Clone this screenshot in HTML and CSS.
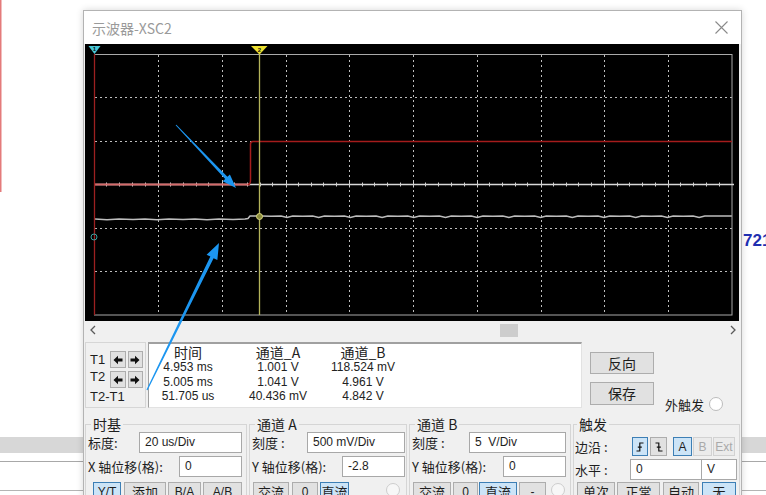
FILE: index.html
```html
<!DOCTYPE html>
<html lang="zh-CN">
<head>
<meta charset="utf-8">
<title>示波器-XSC2</title>
<link rel="stylesheet" href="styles.css">
</head>
<body>
<div class="desktop">
  <div class="window">
    <div class="titlebar">
      <span class="title">示波器-XSC2</span>
      <svg class="close" width="13" height="13" viewBox="0 0 13 13"><path d="M0.5 0.5L12.5 12.5M12.5 0.5L0.5 12.5"/></svg>
    </div>

    <div class="screen">
      <svg class="scope" width="654" height="277" viewBox="85 44 654 277">
        <path class="grid" d="M158.5 55V315M222.5 55V315M286.5 55V315M349.5 55V315M413.5 55V315M477.5 55V315M541.5 55V315M604.5 55V315M668.5 55V315M95 97.5H732M95 141.5H732M95 228.5H732M95 271.5H732"/>
        <rect class="frame" x="94.5" y="54.5" width="637.5" height="260.5"/>
        <path class="axis" d="M94 184.5H734"/>
        <path class="ticks" d="M106.5 182.5v4M119.5 182.5v4M132.5 182.5v4M145.5 182.5v4M158.5 181.5v6M170.5 182.5v4M183.5 182.5v4M196.5 182.5v4M208.5 182.5v4M222.5 181.5v6M234.5 182.5v4M247.5 182.5v4M260.5 182.5v4M272.5 182.5v4M286.5 181.5v6M298.5 182.5v4M311.5 182.5v4M323.5 182.5v4M336.5 182.5v4M349.5 181.5v6M362.5 182.5v4M374.5 182.5v4M387.5 182.5v4M400.5 182.5v4M413.5 181.5v6M425.5 182.5v4M438.5 182.5v4M451.5 182.5v4M464.5 182.5v4M477.5 181.5v6M489.5 182.5v4M502.5 182.5v4M515.5 182.5v4M527.5 182.5v4M541.5 181.5v6M553.5 182.5v4M566.5 182.5v4M578.5 182.5v4M591.5 182.5v4M604.5 181.5v6M617.5 182.5v4M629.5 182.5v4M642.5 182.5v4M655.5 182.5v4M668.5 181.5v6M680.5 182.5v4M693.5 182.5v4M706.5 182.5v4M719.5 182.5v4"/>
        <path class="trace-b" d="M95 219l12 0.8l12 -0.8l14 0.6l12 -0.6l12 0.8l12 -0.8l14 0.6l12 -0.6l12 0.8l12 -0.8l14 0.6l12 -0.6l3 -0.5l2 -2.5l3 0l8 0l10 0.3l10 -0.3l6 1.5l5.7 -1.5l10 0.3l10 -0.3l6 1.5l5.7 -1.5l10 0.3l10 -0.3l6 1.5l5.7 -1.5l10 0.3l10 -0.3l6 1.5l5.7 -1.5l10 0.3l10 -0.3l6 1.5l5.7 -1.5l10 0.3l10 -0.3l6 1.5l5.7 -1.5l10 0.3l10 -0.3l6 1.5l5.7 -1.5l10 0.3l10 -0.3l6 1.5l5.7 -1.5l10 0.3l10 -0.3l6 1.5l5.7 -1.5l10 0.3l10 -0.3l6 1.5l5.7 -1.5l10 0.3l10 -0.3l6 1.5l5.7 -1.5l10 0.3l10 -0.3l6 1.5l5.7 -1.5l10 0.3l10 -0.3l6 1.5l5.7 -1.5l10 0.3l10 -0.3l6 1.5l5.7 -1.5l27 0"/>
        <path class="trace-a-low" d="M95 184.5H249.5"/>
        <path class="trace-a" d="M248 184.5Q250.5 184.5 250.5 180V144Q250.5 141.5 253 141.5H732"/>
        <path class="cur1" d="M94.5 54V315"/>
        <path class="cur2" d="M259.5 46V315"/>
        <circle class="dot2" cx="259.5" cy="216.5" r="3"/>
        <circle class="dot1" cx="94" cy="237" r="3"/>
        <polygon class="m1" points="88.5,46 100.5,46 94.5,54"/>
        <text class="mt" x="94.5" y="51.3">1</text>
        <polygon class="m2" points="251,46 267.5,46 259.5,54.5"/>
        <text class="mt" x="259.5" y="51.5">2</text>
      </svg>
    </div>

    <div class="hscroll">
      <svg class="chev" width="6" height="10" viewBox="0 0 6 10"><path d="M5 1L1 5L5 9"/></svg>
      <div class="track"><div class="thumb"></div></div>
      <svg class="chev" width="6" height="10" viewBox="0 0 6 10"><path d="M1 1L5 5L1 9"/></svg>
    </div>

    <div class="readout">
      <div class="cursors">
        <div class="crow">
          <span class="clabel">T1</span>
          <span class="abtn"><svg width="10" height="10" viewBox="0 0 10 10"><path d="M0.5 5L5 0.8V3.6H9.5V6.4H5V9.2Z"/></svg></span>
          <span class="abtn"><svg width="10" height="10" viewBox="0 0 10 10"><path d="M9.5 5L5 0.8V3.6H0.5V6.4H5V9.2Z"/></svg></span>
        </div>
        <div class="crow crow2">
          <span class="clabel clabel2">T2</span>
          <span class="abtn"><svg width="10" height="10" viewBox="0 0 10 10"><path d="M0.5 5L5 0.8V3.6H9.5V6.4H5V9.2Z"/></svg></span>
          <span class="abtn"><svg width="10" height="10" viewBox="0 0 10 10"><path d="M9.5 5L5 0.8V3.6H0.5V6.4H5V9.2Z"/></svg></span>
        </div>
        <div class="crow3">T2-T1</div>
      </div>

      <div class="table">
        <div class="th">时间</div><div class="th">通道_A</div><div class="th">通道_B</div>
        <div>4.953 ms</div><div>1.001 V</div><div>118.524 mV</div>
        <div>5.005 ms</div><div>1.041 V</div><div>4.961 V</div>
        <div>51.705 us</div><div>40.436 mV</div><div>4.842 V</div>
      </div>

      <div class="actions">
        <div class="btn2">反向</div>
        <div class="btn2 btn2b">保存</div>
      </div>

      <div class="ext">
        <span>外触发</span>
        <span class="radio"></span>
      </div>
    </div>

    <div class="controls">
      <fieldset class="grp g-time">
        <legend>时基</legend>
        <div class="row r1">
          <span class="lbl">标度:</span>
          <div class="field f-scale-t">20 us/Div</div>
        </div>
        <div class="row r2">
          <span class="lbl">X 轴位移(格):</span>
          <div class="field f-pos">0</div>
        </div>
        <div class="brow b-time">
          <div class="btn on asc w28">Y/T</div>
          <div class="btn w42 gap3">添加</div>
          <div class="btn asc w33 gap2">B/A</div>
          <div class="btn asc w39 gap2">A/B</div>
        </div>
      </fieldset>

      <fieldset class="grp g-cha">
        <legend>通道 A</legend>
        <div class="row r1">
          <span class="lbl">刻度 :</span>
          <div class="field f-scale-a">500 mV/Div</div>
        </div>
        <div class="row r2">
          <span class="lbl">Y 轴位移(格):</span>
          <div class="field f-pos">-2.8</div>
        </div>
        <div class="brow b-cha">
          <div class="btn w36">交流</div>
          <div class="btn asc w26 gap3">0</div>
          <div class="btn on w29 gap2">直流</div>
          <span class="radio dim rad-a"></span>
        </div>
      </fieldset>

      <fieldset class="grp g-chb">
        <legend>通道 B</legend>
        <div class="row r1">
          <span class="lbl">刻度 :</span>
          <div class="field f-scale-b">5&nbsp; V/Div</div>
        </div>
        <div class="row r2">
          <span class="lbl">Y 轴位移(格):</span>
          <div class="field f-pos">0</div>
        </div>
        <div class="brow b-chb">
          <div class="btn w38">交流</div>
          <div class="btn asc w25 gap2">0</div>
          <div class="btn on w38 gap1">直流</div>
          <div class="btn asc w27 gap2">-</div>
          <span class="radio dim rad-b"></span>
        </div>
      </fieldset>

      <fieldset class="grp g-trig">
        <legend>触发</legend>
        <div class="trow t1">
          <span class="lbl tl">边沿 :</span>
          <div class="btn on edge w16 gap2"><svg width="12" height="14" viewBox="0 0 12 14"><path d="M2.5 11H5.8V3H9.5M3.8 7.2H7.8"/></svg></div>
          <div class="btn edge w17 gap2"><svg width="12" height="14" viewBox="0 0 12 14"><path d="M2.5 3H5.8V11H9.5M3.8 7.2H7.8"/></svg></div>
          <div class="btn on asc w19 gap6">A</div>
          <div class="btn off asc w19 gap1">B</div>
          <div class="btn off asc w22 gap1">Ext</div>
        </div>
        <div class="trow t2">
          <span class="lbl tl">水平 :</span>
          <div class="field f-level">0</div>
          <div class="field f-unit">V</div>
        </div>
        <div class="brow b-trig">
          <div class="btn w38">单次</div>
          <div class="btn w43 gap2">正常</div>
          <div class="btn w36 gap3">自动</div>
          <div class="btn on w34 gap3">无</div>
        </div>
      </fieldset>
    </div>
  </div>

  <div class="sidenote">721</div>

  <svg class="annot" width="766" height="495" viewBox="0 0 766 495">
    <polygon points="175.64,125.35 225.2,178.94 222.7,181.35 236,188 229.9,174.45 227.4,176.86 176.36,124.65"/>
    <polygon points="146.46,389.74 210.34,256.58 206.57,254.73 219,243 217.35,260.0 213.58,258.16 147.54,390.26"/>
  </svg>
</div>
</body>
</html>
```

FILE: styles.css
```css
* { box-sizing: border-box; }

body {
  margin: 0;
  width: 766px;
  height: 495px;
  overflow: hidden;
  background: #fff;
  font-family: "Noto Sans CJK SC", "Noto Sans", sans-serif;
  color: #1e1e1e;
}

.desktop {
  position: relative;
  width: 766px;
  height: 495px;
  overflow: hidden;
  background:
    linear-gradient(#e47b7b, #e47b7b) 0 0 / 1.5px 192px no-repeat,
    linear-gradient(#fff 0 437px, #d7d7d7 437px 453px, #fff 453px 461px, #a8a8a8 461px 462px, #fff 462px 490px, #b4b4b4 490px 491px, #fff 491px);
}

/* window */
.window {
  position: absolute;
  left: 83px;
  top: 10px;
  width: 659px;
  height: 500px;
  border: 1px solid #b3b3b3;
  background: #f0f0f0;
  box-shadow: 0 0 7px rgba(0, 0, 0, 0.16);
}

.titlebar {
  height: 33px;
  background: #fff;
  display: flex;
  align-items: center;
  padding-left: 8px;
}
.title { font-size: 14px; color: #9a9a9a; line-height: 1; }
.close { margin-left: auto; margin-right: 13px; stroke: #8a8a8a; stroke-width: 1.1; fill: none; }

/* scope screen */
.screen { margin-left: 1px; width: 654px; height: 277px; background: #000; }
.scope { display: block; }
.scope .grid { stroke: #bdbdbd; stroke-width: 1; stroke-dasharray: 2 3; fill: none; }
.scope .frame { fill: none; stroke: #a9a9a9; stroke-width: 1; }
.scope .axis { stroke: #d8d8d8; stroke-width: 1.5; }
.scope .ticks { stroke: #d0d0d0; stroke-width: 1; }
.scope .trace-b { stroke: #bdbdbd; stroke-width: 1.5; fill: none; }
.scope .trace-a-low { stroke: #d46a6a; stroke-width: 2.2; }
.scope .trace-a { stroke: #a51c1c; stroke-width: 1.5; fill: none; }
.scope .cur1 { stroke: #9c2020; stroke-width: 1.3; }
.scope .cur2 { stroke: #b4b45a; stroke-width: 1.3; }
.scope .dot2 { fill: #8c8c3c; stroke: #d8d880; stroke-width: 1; }
.scope .dot1 { fill: none; stroke: #3aa0a0; stroke-width: 1; }
.scope .m1 { fill: #48c8d8; }
.scope .m2 { fill: #ece030; }
.scope .mt { font: bold 6px "Liberation Sans", sans-serif; text-anchor: middle; fill: #111; }

/* scrollbar */
.hscroll { height: 18px; display: flex; align-items: center; padding: 0 5px 0 6px; }
.chev { stroke: #5a5a5a; stroke-width: 1.3; fill: none; flex: none; }
.track { flex: 1; height: 13px; }
.thumb { margin-left: 404px; width: 18px; height: 13px; background: #cdcdcd; }

/* readout row */
.readout { height: 70px; display: flex; align-items: flex-start; padding-top: 3px; }

.cursors {
  margin-left: 1px;
  width: 61px;
  height: 66px;
  border: 1px solid #d6d6d6;
  padding: 8px 0 0 4px;
  font-family: "Liberation Sans", sans-serif;
  font-size: 13px;
}
.crow { display: flex; align-items: center; height: 17px; }
.crow2 { margin-top: 3px; }
.clabel { width: 21px; line-height: 17px; }
.clabel2 { margin-top: -6px; }
.abtn {
  width: 16px;
  height: 17px;
  border: 1px solid #adadad;
  background: #e1e1e1;
  display: flex;
  align-items: center;
  justify-content: center;
  margin-right: 2px;
}
.abtn svg { fill: #111; }
.crow3 { margin-top: 2px; line-height: 14px; }

.table {
  margin-left: 2px;
  width: 434px;
  height: 66px;
  background: #fff;
  border-style: solid;
  border-width: 2px 1px 1px 1px;
  border-color: #a0a0a0 #e2e2e2 #e2e2e2 #a0a0a0;
  display: grid;
  grid-template-columns: 78px 102px 68px;
  grid-template-rows: 16px 14.5px 14.5px 14.5px;
  justify-items: center;
  font-family: "Liberation Sans", sans-serif;
  font-size: 12px;
  line-height: 14.5px;
  color: #222;
}
.table div { white-space: nowrap; }
.table .th { font-family: "Noto Sans CJK SC", sans-serif; font-size: 14px; line-height: 16px; }

.actions { margin-left: 8px; padding-top: 10px; display: flex; flex-direction: column; gap: 8px; }
.btn2 {
  width: 64px;
  height: 22px;
  border: 1px solid #adadad;
  background: #e1e1e1;
  font-size: 14px;
  line-height: 20px;
  text-align: center;
}
.btn2b { height: 23px; }

.ext { margin-left: 11px; margin-top: 54px; display: flex; align-items: center; height: 16px; font-size: 13px; }
.ext .radio { margin-left: 5px; }

.radio {
  display: block;
  width: 14px;
  height: 14px;
  border-radius: 50%;
  border: 1px solid #bcbcbc;
  background: #fff;
  flex: none;
}
.radio.dim { border-color: #cdcdcd; background: #f7f7f7; }

/* controls */
.controls { display: flex; gap: 2px; padding: 8px 0 0 1px; }
.grp {
  margin: 0;
  min-width: 0;
  height: 110px;
  border: 1px solid #d5d5d5;
  padding: 0 4px 0 2px;
}
.grp legend { padding: 0 2px; margin-left: 3px; font-size: 14px; line-height: 15px; }
.g-time { width: 162px; }
.g-cha { width: 158px; padding-right: 1px; }
.g-chb { width: 162px; }
.g-trig { width: 167px; padding-left: 1px; padding-right: 2px; }
.g-trig legend { margin-left: 2px; }

.lbl { font-size: 13px; white-space: nowrap; line-height: 21px; }
.row { display: flex; align-items: center; justify-content: space-between; height: 21px; }
.r2 { margin-top: 3px; }

.field {
  height: 21px;
  border: 1px solid #a8a8a8;
  background: #fff;
  font-family: "Liberation Sans", sans-serif;
  font-size: 12px;
  line-height: 19px;
  padding-left: 5px;
  white-space: nowrap;
  flex: none;
}
.f-scale-t { width: 103px; }
.f-pos { width: 63px; }
.f-scale-a { width: 98px; }
.f-scale-b { width: 97px; }
.f-level { width: 72px; }
.f-unit { width: 35px; border-left: none; }

.brow { display: flex; align-items: flex-start; margin-top: 5px; }
.b-time { padding-left: 5px; }
.b-cha { padding-left: 1px; }
.b-chb { padding-left: 1px; }
.b-trig { margin-top: 2px; padding-left: 2px; }

.trow { display: flex; align-items: center; }
.t1 { margin-top: 5px; height: 19px; }
.t2 { margin-top: 3px; height: 21px; }
.tl { width: 55px; }

.btn {
  height: 20px;
  border: 1px solid #adadad;
  background: #e1e1e1;
  font-size: 13px;
  line-height: 18px;
  text-align: center;
  overflow: hidden;
  white-space: nowrap;
  flex: none;
}
.t1 .btn { height: 19px; }
.btn.on { background: #cce4f7; border-color: #3d7fb5; }
.btn.off { background: #ebebeb; border-color: #d2d2d2; color: #a9a9a9; }
.btn.asc { font-family: "Liberation Sans", sans-serif; font-size: 12px; }
.btn.edge { display: flex; align-items: center; justify-content: center; }
.btn.edge svg { stroke: #111; stroke-width: 1.2; fill: none; }

.w16 { width: 16px; } .w17 { width: 17px; } .w19 { width: 19px; } .w22 { width: 22px; }
.w25 { width: 25px; } .w26 { width: 26px; } .w27 { width: 27px; } .w28 { width: 28px; }
.w29 { width: 29px; } .w33 { width: 33px; } .w34 { width: 34px; } .w36 { width: 36px; }
.w38 { width: 38px; } .w39 { width: 39px; } .w42 { width: 42px; } .w43 { width: 43px; }
.gap1 { margin-left: 1px; } .gap2 { margin-left: 2px; } .gap3 { margin-left: 3px; } .gap6 { margin-left: 6px; }

.rad-a { margin-left: auto; margin-right: 5px; margin-top: 1px; }
.rad-b { margin-left: auto; margin-right: 1px; margin-top: 1px; }

/* outside the window */
.sidenote {
  position: absolute;
  left: 743px;
  top: 231px;
  font: bold 17px "Liberation Sans", sans-serif;
  color: #1f2fb0;
  white-space: nowrap;
}

.annot { position: absolute; left: 0; top: 0; pointer-events: none; }
.annot polygon { fill: #1c96f0; }
```
